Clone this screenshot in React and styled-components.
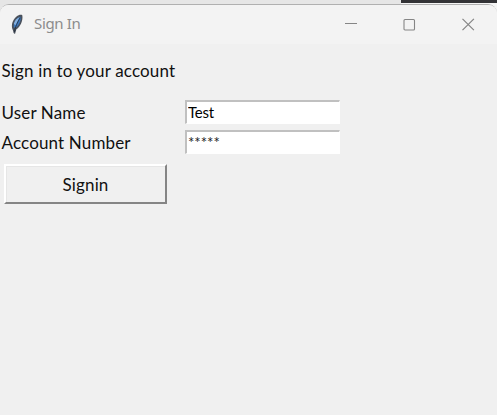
import React from 'react';
import styled, { createGlobalStyle } from 'styled-components';

const GlobalStyle = createGlobalStyle`
  * { box-sizing: border-box; }
  body { margin: 0; overflow: hidden; background: #e6e6e6; }
`;

const Desktop = styled.div`
  width: 497px;
  height: 415px;
  display: flex;
  flex-direction: column;
  background: linear-gradient(90deg, #e6e6e6 401px, #f5f5f5 401px);
`;

const Backdrop = styled.div`
  height: 4px;
  flex: none;
  display: flex;
  justify-content: flex-end;
`;

const DarkStrip = styled.div`
  width: 96px;
  height: 3px;
  background: #333336;
`;

const Window = styled.main`
  flex: 1;
  display: flex;
  flex-direction: column;
  border-top: 1px solid #b0b0b0;
  border-radius: 9px 9px 0 0;
  background: #f0f0f0;
  overflow: hidden;
`;

const TitleBar = styled.header`
  height: 39px;
  flex: none;
  display: flex;
  align-items: center;
  padding: 0 22px 1px 10px;
  background: #f3f3f3;
`;

const Title = styled.h1`
  flex: 1;
  margin: 0 0 2px 10px;
  font: 400 15px/20px "Noto Sans", sans-serif;
  letter-spacing: -0.35px;
  color: #8c8c8c;
`;

const Controls = styled.div`
  display: flex;
  gap: 46px;
`;

const ControlButton = styled.button`
  display: block;
  width: 13px;
  height: 13px;
  padding: 0;
  border: 0;
  background: none;
  svg { display: block; }
`;

const Form = styled.form`
  display: flex;
  flex-direction: column;
  align-items: flex-start;
  padding-top: 16px;
`;

const Text = styled.span`
  font: 400 17px/22px Lato, sans-serif;
  letter-spacing: 0.15px;
  white-space: nowrap;
  color: #111;
`;

const Heading = styled.div`
  height: 22px;
  padding-left: 1.5px;
  margin-bottom: 18px;
`;

const Row = styled.label`
  display: grid;
  grid-template-columns: 183.5px 155px;
  align-items: center;
  height: 24px;
  padding-left: 1.5px;
  margin-bottom: 6px;
  ${Text} { padding-top: 2px; }
`;

const Entry = styled.input`
  width: 155px;
  height: 24px;
  padding: 0 0 1px 1px;
  border: 0 solid #fff;
  border-width: 2px 1px 1px 2px;
  border-top-color: #c0c0c0;
  border-left-color: #c0c0c0;
  border-radius: 0;
  outline: 0;
  background: #fff;
  color: ${(p) => p.$ink || '#000'};
  font: 400 15px/18px Lato, sans-serif;
  letter-spacing: ${(p) => p.$spacing || 0}px;
`;

const SubmitButton = styled.button`
  width: 163px;
  height: 40px;
  margin: 4px 0 0 4px;
  padding: 1px 0 0;
  border: 2px solid;
  border-color: #fff #858585 #858585 #fff;
  border-radius: 0;
  background: #f0f0f0;
  box-shadow: inset 1px 1px #e6e6e6;
`;

const Feather = () => (
  <svg width="14" height="21" viewBox="0 0 14 21">
    <path d="M3 16.5C.8 12 2 6.5 6.5 2.5c2-1.8 5-2 5.8-1.2.9 5-1.8 11.6-5.9 14L5 20l-1.4-1z" fill="#4a515c" />
    <path d="M3.8 13.5C3.2 9.5 5.5 4.5 10.8 2.8c.3 4.4-2.4 9.2-4.8 10.8z" fill="#3d78bd" />
    <path d="M3.8 10C4.8 6.3 7 4 9.4 3.2L5.7 11z" fill="#85b0df" />
    <path d="M10.3 3.6C7.6 8 5.2 12.6 4.4 18" fill="none" stroke="#202b3a" strokeWidth=".8" />
  </svg>
);

const App = () => (
  <>
    <GlobalStyle />
    <Desktop>
      <Backdrop><DarkStrip /></Backdrop>
      <Window>
        <TitleBar>
          <Feather />
          <Title>Sign In</Title>
          <Controls>
            <ControlButton aria-label="Minimize">
              <svg width="13" height="13"><path d="M.5 5.5h12" stroke="#858585" strokeWidth="1" shapeRendering="crispEdges" /></svg>
            </ControlButton>
            <ControlButton aria-label="Maximize">
              <svg width="13" height="13"><rect x="1" y="1.5" width="10.5" height="10.5" rx="1" fill="none" stroke="#858585" strokeWidth="1.1" /></svg>
            </ControlButton>
            <ControlButton aria-label="Close">
              <svg width="13" height="13"><path d="M.5.8l11.4 11.4M11.9.8L.5 12.2" stroke="#858585" strokeWidth="1.2" /></svg>
            </ControlButton>
          </Controls>
        </TitleBar>
        <Form>
          <Heading><Text>Sign in to your account</Text></Heading>
          <Row>
            <Text>User Name</Text>
            <Entry defaultValue="Test" $spacing={-0.2} />
          </Row>
          <Row>
            <Text>Account Number</Text>
            <Entry defaultValue="*****" $ink="#222" />
          </Row>
          <SubmitButton type="button"><Text>Signin</Text></SubmitButton>
        </Form>
      </Window>
    </Desktop>
  </>
);

export default App;
